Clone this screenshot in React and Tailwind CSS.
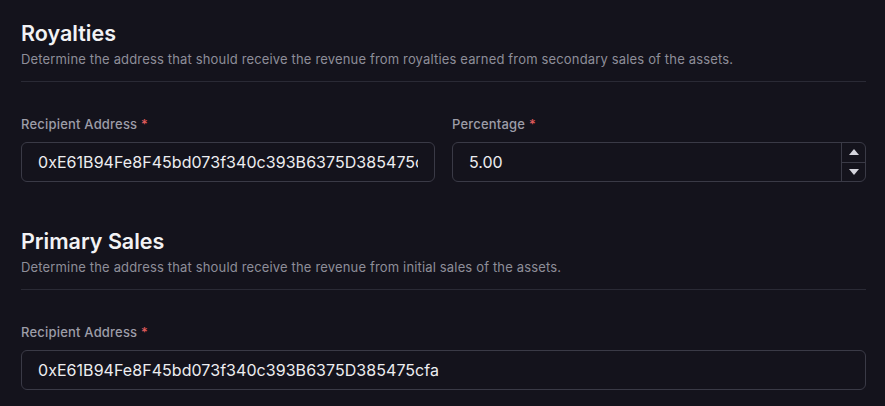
export default function App() {
    return (
        <div className="min-h-screen bg-[#14131c] px-[21px] pt-[19px] pr-[19px] font-['Inter',sans-serif]">
            <Section
                title="Royalties"
                desc="Determine the address that should receive the revenue from royalties earned from secondary sales of the assets."
            >
                <div className="grid grid-cols-2 gap-[17px]">
                    <Field label="Recipient Address">
                        <input
                            readOnly
                            value="0xE61B94Fe8F45bd073f340c393B6375D385475cfa"
                            className="h-10 w-full rounded-md border border-[#3a3a46] bg-transparent px-4 text-base tracking-[0.05px] text-[#ededf0] outline-none"
                        />
                    </Field>
                    <Field label="Percentage">
                        <div className="flex h-10 w-full rounded-md border border-[#3a3a46]">
                            <input
                                readOnly
                                value="5.00"
                                className="min-w-0 flex-1 bg-transparent px-4 text-base text-[#ededf0] outline-none"
                            />
                            <div className="flex w-6 flex-col border-l border-[#3a3a46]">
                                <button className="flex flex-1 items-center justify-center border-b border-[#3a3a46]">
                                    <svg width="10" height="6" viewBox="0 0 10 6"><path d="M5 0 L10 6 L0 6 Z" fill="#d4d4dc" /></svg>
                                </button>
                                <button className="flex flex-1 items-center justify-center">
                                    <svg width="10" height="6" viewBox="0 0 10 6"><path d="M0 0 L10 0 L5 6 Z" fill="#d4d4dc" /></svg>
                                </button>
                            </div>
                        </div>
                    </Field>
                </div>
            </Section>

            <div className="mt-[45px]">
                <Section
                    title="Primary Sales"
                    desc="Determine the address that should receive the revenue from initial sales of the assets."
                >
                    <Field label="Recipient Address">
                        <input
                            readOnly
                            value="0xE61B94Fe8F45bd073f340c393B6375D385475cfa"
                            className="h-10 w-full rounded-md border border-[#3a3a46] bg-transparent px-4 text-base tracking-[0.05px] text-[#ededf0] outline-none"
                        />
                    </Field>
                </Section>
            </div>
        </div>
    );
}

const Section = ({ title, desc, children }) => (
    <div>
        <h2 className="text-[21.5px] font-semibold leading-7 text-[#f2f2f4]">{title}</h2>
        <p className="mt-[2px] text-[13px] leading-5 tracking-[0.16px] text-[#8e8e99]">{desc}</p>
        <div className="mt-3 h-px bg-[#2a2a35]" />
        <div className="mt-8">{children}</div>
    </div>
);

const Field = ({ label, children }) => (
    <div>
        <label className="mb-2 block text-[13px] font-medium leading-5 tracking-[0.2px] text-[#9d9da8]">
            {label} <span className="text-[#e25c5c]">*</span>
        </label>
        {children}
    </div>
);
